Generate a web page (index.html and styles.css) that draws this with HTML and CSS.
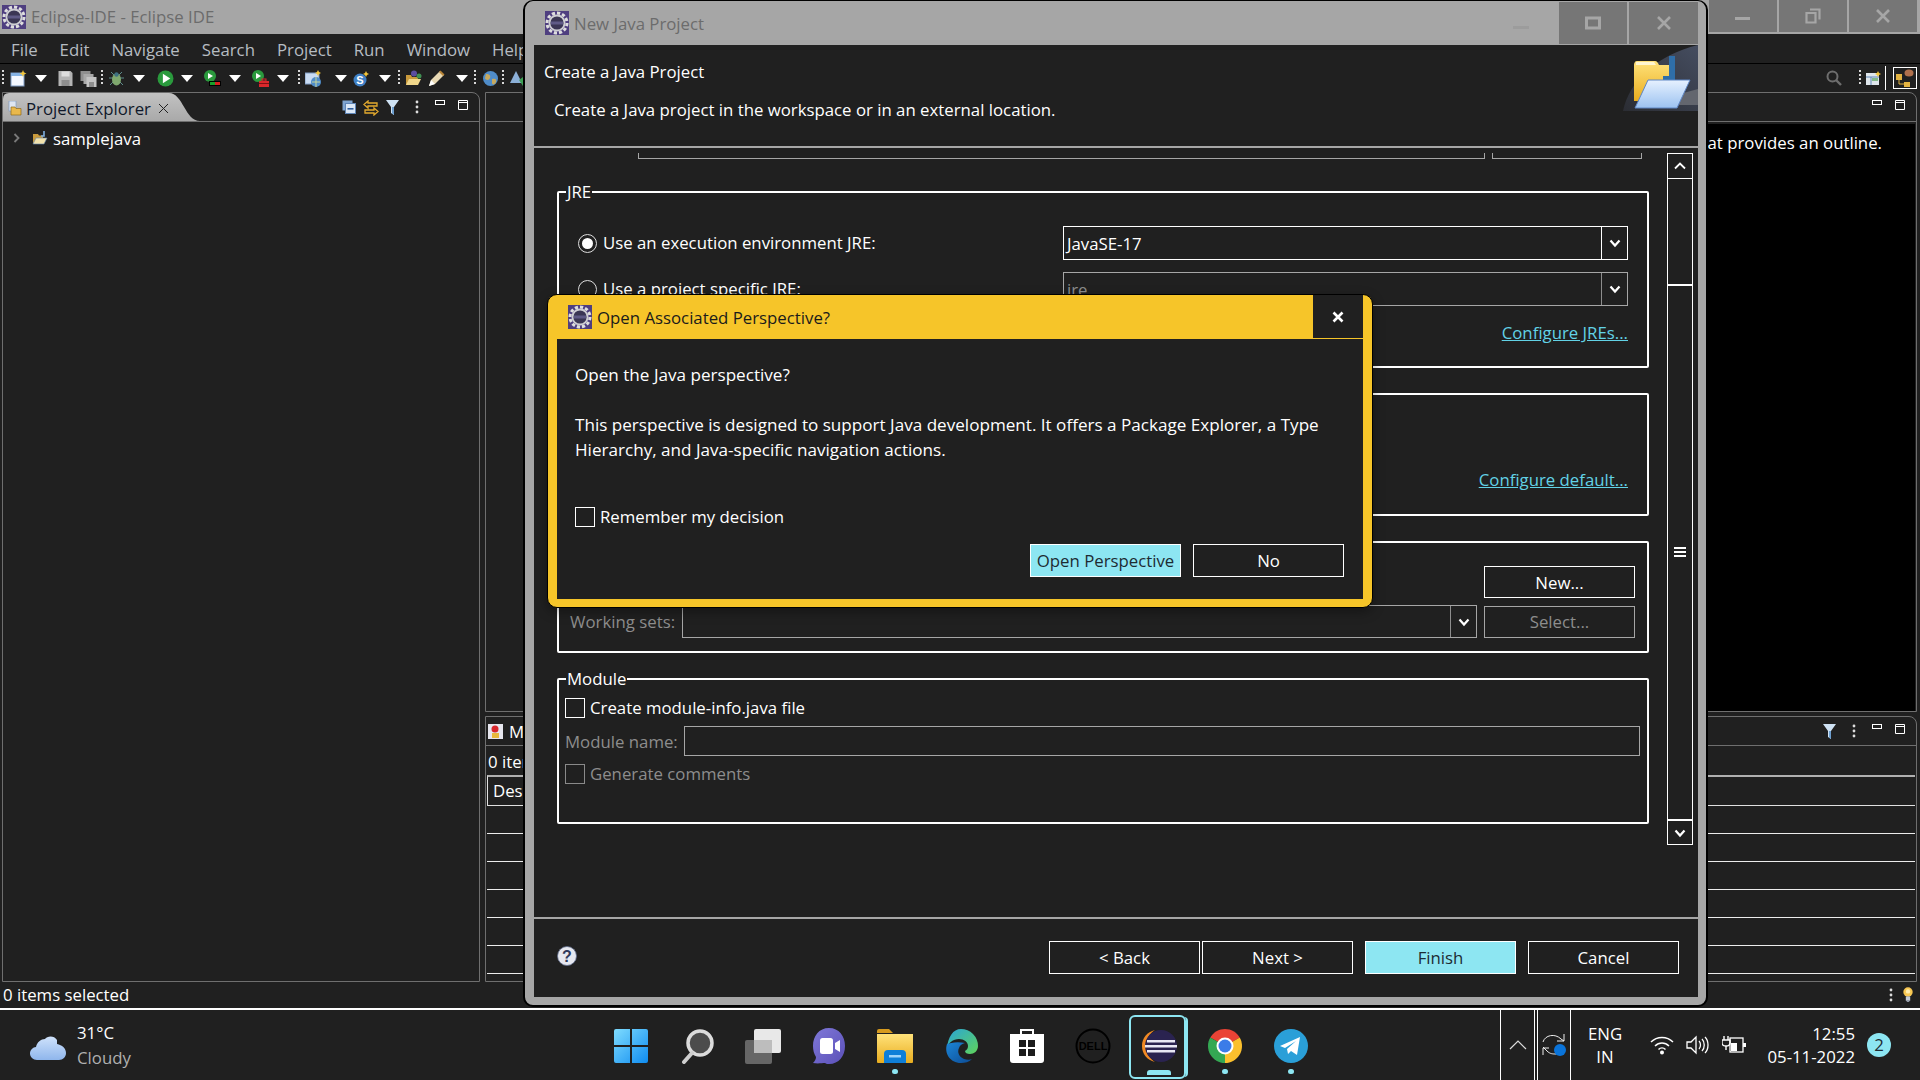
FILE: index.html
```html
<!DOCTYPE html>
<html lang="en">
<head>
    <meta charset="UTF-8">
    <title>New Java Project - Eclipse IDE</title>
    <link rel="stylesheet" href="styles.css">
</head>
<body>
    <svg class="defs" width="0" height="0">
        <defs>
            <linearGradient id="g-start" x1="0" y1="0" x2="1" y2="1"><stop offset="0" stop-color="#7fdcff"/><stop offset="1" stop-color="#0f8cf0"/></linearGradient>
            <linearGradient id="g-folder" x1="0" y1="0" x2="0" y2="1"><stop offset="0" stop-color="#ffe27a"/><stop offset="1" stop-color="#e9ad1f"/></linearGradient>
            <linearGradient id="g-chat" x1="0" y1="0" x2="1" y2="1"><stop offset="0" stop-color="#7f78d8"/><stop offset="1" stop-color="#5b50b8"/></linearGradient>
            <linearGradient id="g-edge1" x1="0" y1="0" x2="1" y2="1"><stop offset="0" stop-color="#2aa5d8"/><stop offset="1" stop-color="#5fd35a"/></linearGradient>
            <linearGradient id="g-edge2" x1="0" y1="0" x2="1" y2="1"><stop offset="0" stop-color="#1c86d8"/><stop offset="1" stop-color="#0d4c94"/></linearGradient>
            <linearGradient id="g-swoosh" x1="0" y1="1" x2="1" y2="0"><stop offset="0" stop-color="#2b2d33"/><stop offset="1" stop-color="#454d60"/></linearGradient>
            <linearGradient id="g-front" x1="0" y1="0" x2="0" y2="1"><stop offset="0" stop-color="#e6f1ff"/><stop offset="1" stop-color="#9cc2f0"/></linearGradient>
            <linearGradient id="g-cloud" x1="0" y1="0" x2="0" y2="1"><stop offset="0" stop-color="#cfe2fb"/><stop offset="1" stop-color="#8fb6ec"/></linearGradient>

            <symbol id="i-eclipse-small" viewBox="0 0 24 24">
                <rect width="24" height="24" fill="#4f3f80"/>
                <circle cx="12" cy="12" r="10" fill="none" stroke="#dedede" stroke-width="3" stroke-dasharray="3.200 2"/>
                <circle cx="12" cy="12" r="8.500" fill="#cfcfd4"/>
                <circle cx="12" cy="12" r="6.600" fill="#3b3654"/>
                <rect x="6" y="10.500" width="12" height="3" fill="#5f5a86"/>
            </symbol>
            <symbol id="i-caret" viewBox="0 0 12 7"><path d="M0 0h12L6 7z" fill="#fff"/></symbol>
            <symbol id="i-chev" viewBox="0 0 12 10"><path d="M1.500 2.500 6 7.500l4.500-5" fill="none" stroke="#fff" stroke-width="2.200"/></symbol>
            <symbol id="i-chev-up" viewBox="0 0 12 10"><path d="M1 7.500 6 2.500l5 5" fill="none" stroke="#fff" stroke-width="1.800"/></symbol>
            <symbol id="i-new" viewBox="0 0 17 17"><rect x="1" y="3" width="13" height="13" fill="#f4f8ff" stroke="#7f9cc4"/><rect x="1" y="3" width="13" height="3" fill="#86b3e4"/><path d="M13 0l1 2.500 2.500 1-2.500 1-1 2.500-1-2.500-2.500-1 2.500-1z" fill="#f3c63c"/></symbol>
            <symbol id="i-save" viewBox="0 0 16 17"><path d="M1 1h12l2 2v13H1z" fill="#b4b4b4"/><rect x="4" y="1.500" width="8" height="5" fill="#dedede"/><rect x="4" y="10" width="8" height="6" fill="#8e8e8e"/></symbol>
            <symbol id="i-saveall" viewBox="0 0 16 17"><path d="M0 1h10v10H0z" fill="#8f8f8f"/><path d="M3 4h10v10H3z" fill="#a8a8a8"/><path d="M6 7h10v10H6z" fill="#c4c4c4"/><rect x="8.500" y="12" width="5" height="5" fill="#8e8e8e"/></symbol>
            <symbol id="i-bug" viewBox="0 0 17 17"><path d="M3 2l3 3M14 2l-3 3M1 8h4M12 8h4M2 15l3-3M15 15l-3-3" stroke="#5d8c8c" fill="none"/><ellipse cx="8.500" cy="9.500" rx="4.500" ry="6" fill="#7fa86e"/><circle cx="8.500" cy="4.500" r="2.200" fill="#3d6f80"/></symbol>
            <symbol id="i-run" viewBox="0 0 16 16"><circle cx="8" cy="8" r="7.500" fill="#2a9a3d"/><path d="M5.500 3.500v9l7-4.500z" fill="#fff"/></symbol>
            <symbol id="i-cover" viewBox="0 0 17 17"><circle cx="6" cy="6" r="6" fill="#2a9a3d"/><path d="M4 3v6l5-3z" fill="#fff"/><rect x="5" y="11" width="12" height="5" fill="#000"/><rect x="6" y="12" width="5" height="3" fill="#1aa02a"/><rect x="11" y="12" width="5" height="3" fill="#d61f1f"/></symbol>
            <symbol id="i-extern" viewBox="0 0 17 17"><circle cx="6" cy="6" r="6" fill="#2a9a3d"/><path d="M4 3v6l5-3z" fill="#fff"/><rect x="7" y="11" width="10" height="6" fill="#d8282c"/><rect x="10" y="9" width="4" height="2" fill="none" stroke="#d8282c"/><rect x="7" y="13" width="10" height="1" fill="#7d1013"/></symbol>
            <symbol id="i-javaproj" viewBox="0 0 17 17"><rect x="0" y="3" width="14" height="11" fill="#c9dbf2" stroke="#7f9cc4"/><circle cx="11" cy="12" r="5" fill="#4f8cc9"/><path d="M7 12h8M11 7v10" stroke="#c8d69a"/><path d="M13 0l1 2 2 1-2 1-1 2-1-2-2-1 2-1z" fill="#f3c63c"/></symbol>
            <symbol id="i-search-s" viewBox="0 0 17 17"><circle cx="7" cy="10" r="6.500" fill="#3f7fc4"/><text x="7" y="14" text-anchor="middle" font-size="11" font-weight="700" font-family="Liberation Sans" fill="#fff">S</text><path d="M13 1l1 2 2 1-2 1-1 2-1-2-2-1 2-1z" fill="#f3c63c"/></symbol>
            <symbol id="i-openfolder" viewBox="0 0 17 17"><path d="M1 5h5l1 2h6v8H1z" fill="#c99a3c"/><path d="M1 15l3-6h12l-3 6z" fill="#f0d68a"/><circle cx="9" cy="3.500" r="3" fill="#5b4ca0"/><circle cx="14" cy="6" r="2.500" fill="#3f8f52"/></symbol>
            <symbol id="i-pencil" viewBox="0 0 17 17"><path d="M1 16l2-6L12 1l4 4-9 9z" fill="#e8d9b4"/><path d="M11 2l4 4 1.500-1.500-4-4z" fill="#b88436"/><path d="M1 16l2-6 4 4z" fill="#fff"/></symbol>
            <symbol id="i-globe" viewBox="0 0 17 17"><circle cx="8.500" cy="8.500" r="7.500" fill="#4f8cc9"/><path d="M4 4c3 0 5 1 4 4S3 10 3 8zM10 9c3-1 5 0 4 3s-4 3-4 1z" fill="#c7a95f"/></symbol>
            <symbol id="i-person" viewBox="0 0 17 17"><path d="M6 1l6 12H0z" fill="#8cb0d8"/><path d="M9 10l4-3 4 3-4 6z" fill="#3f9f55"/></symbol>
            <symbol id="i-collapse" viewBox="0 0 14 14"><rect x=".5" y=".5" width="10" height="10" fill="#7fa4d0"/><rect x="3.500" y="3.500" width="10" height="10" fill="#dce9f8" stroke="#5f86b8"/><rect x="5.500" y="8" width="6" height="1.600" fill="#2f5f9f"/></symbol>
            <symbol id="i-link" viewBox="0 0 16 16"><path d="M5 1L1 4.500 5 8V6h9V3H5zM11 8l4 3.500-4 3.500v-2H2v-3h9z" fill="none" stroke="#e4aa2e" stroke-width="1.300"/></symbol>
            <symbol id="i-filter" viewBox="0 0 13 15"><path d="M0 0h13L8 7v8l-3-2V7z" fill="#cfe2f4"/><path d="M6 7h2v8l-2-1.500z" fill="#6d9fd0"/></symbol>
            <symbol id="i-dots" viewBox="0 0 4 14"><circle cx="2" cy="2" r="1.400" fill="#ddd"/><circle cx="2" cy="7" r="1.400" fill="#ddd"/><circle cx="2" cy="12" r="1.400" fill="#ddd"/></symbol>
            <symbol id="i-view-min" viewBox="0 0 10 5"><rect x=".5" y=".5" width="9" height="4" fill="none" stroke="#fff"/></symbol>
            <symbol id="i-view-max" viewBox="0 0 10 10"><path d="M.5.5h9v9h-9zM.5 2.500h9" fill="none" stroke="#fff"/></symbol>
            <symbol id="i-project" viewBox="0 0 16 14"><path d="M1 3h5l1 1.500h4V12H1z" fill="#c99a3c"/><path d="M1 13l3-6h11l-3 6z" fill="#f2e2ac" stroke="#5f86b8" stroke-width=".6"/><path d="M12 0v5H9" fill="none" stroke="#7fb0e0" stroke-width="1.600"/></symbol>
            <symbol id="i-explorer" viewBox="0 0 14 15"><rect x="1" y="0" width="7" height="10" fill="#dfe6f2" stroke="#7f9cc4" stroke-width=".7"/><path d="M3 6h4l1 1.500h5V14H3z" fill="#e9b84c" stroke="#8f6a1c" stroke-width=".7"/></symbol>
            <symbol id="i-help" viewBox="0 0 20 20"><circle cx="10" cy="10" r="9.500" fill="#e6e8f0"/><circle cx="10" cy="10" r="9.500" fill="none" stroke="#5f6c8c" stroke-width=".8"/><text x="10" y="15.500" text-anchor="middle" font-size="16" font-weight="700" font-family="Liberation Sans" fill="#2f3a5c">?</text></symbol>
            <symbol id="i-markers" viewBox="0 0 15 15"><rect width="15" height="15" fill="#e6e6ee"/><circle cx="7" cy="5" r="3.500" fill="#d8262c"/><rect x="4" y="9" width="7" height="5" fill="#e8b93c"/></symbol>
            <symbol id="i-lookup" viewBox="0 0 16 16"><circle cx="6.500" cy="6.500" r="5" fill="none" stroke="#6e6e6e" stroke-width="2"/><path d="M10 10l5 5" stroke="#6e6e6e" stroke-width="2.400"/></symbol>
            <symbol id="i-persp-open" viewBox="0 0 15 15"><rect y="2" width="13" height="12" fill="#dfe6ec"/><path d="M0 6h13M5 6v8" stroke="#5f86b8"/><rect x="6" y="7" width="6" height="3" fill="#83b98a"/><path d="M12 0l1 2 2 1-2 1-1 2-1-2-2-1 2-1z" fill="#f3c63c"/></symbol>
            <symbol id="i-persp-java" viewBox="0 0 18 18"><rect x="0" y="5" width="6" height="6" fill="#e3b341"/><rect x="8" y="13" width="6" height="5" fill="#e3b341"/><path d="M3 11v4h5" stroke="#e3b341" fill="none"/><ellipse cx="13" cy="4" rx="4.500" ry="3.500" fill="#b0704c"/></symbol>
            <symbol id="i-bulb" viewBox="0 0 16 24"><circle cx="8" cy="8" r="7.500" fill="#f7c752"/><circle cx="8" cy="7" r="3.500" fill="#ffeeb0"/><rect x="4.500" y="15" width="7" height="7" fill="#c4ccd8"/><rect x="6" y="22" width="4" height="2" fill="#8f98a8"/></symbol>
        </defs>
    </svg>

    <div class="ide">
        <div class="ide-title">
            <svg class="app-icon"><use href="#i-eclipse-small"/></svg>
            <span class="ide-title-text">Eclipse-IDE - Eclipse IDE</span>
            <div class="win-btns">
                <span class="win-btn"><svg width="16" height="16"><rect x="0" y="9" width="15" height="3" fill="#a6a6a6"/></svg></span>
                <span class="win-btn"><svg width="16" height="16"><path d="M5 1.500h9.500v10M1.500 5h9v9.500h-9z" fill="none" stroke="#a6a6a6" stroke-width="2.200"/></svg></span>
                <span class="win-btn"><svg width="16" height="16"><path d="M2 2l12 12M14 2L2 14" stroke="#a6a6a6" stroke-width="2.600"/></svg></span>
            </div>
        </div>
        <nav class="menu">
            <span>File</span><span>Edit</span><span>Navigate</span><span>Search</span><span>Project</span><span>Run</span><span>Window</span><span>Help</span>
        </nav>
        <div class="toolbar">
            <div class="tools">
                <i class="grip"></i>
                <svg class="tb"><use href="#i-new"/></svg>
                <svg class="caret"><use href="#i-caret"/></svg>
                <svg class="tb"><use href="#i-save"/></svg>
                <svg class="tb"><use href="#i-saveall"/></svg>
                <i class="grip"></i>
                <svg class="tb"><use href="#i-bug"/></svg>
                <svg class="caret"><use href="#i-caret"/></svg>
                <svg class="tb"><use href="#i-run"/></svg>
                <svg class="caret"><use href="#i-caret"/></svg>
                <svg class="tb"><use href="#i-cover"/></svg>
                <svg class="caret"><use href="#i-caret"/></svg>
                <svg class="tb"><use href="#i-extern"/></svg>
                <svg class="caret"><use href="#i-caret"/></svg>
                <i class="grip"></i>
                <svg class="tb"><use href="#i-javaproj"/></svg>
                <svg class="caret"><use href="#i-caret"/></svg>
                <svg class="tb"><use href="#i-search-s"/></svg>
                <svg class="caret"><use href="#i-caret"/></svg>
                <i class="grip"></i>
                <svg class="tb"><use href="#i-openfolder"/></svg>
                <svg class="tb"><use href="#i-pencil"/></svg>
                <svg class="caret"><use href="#i-caret"/></svg>
                <i class="grip"></i>
                <svg class="tb"><use href="#i-globe"/></svg>
                <i class="grip"></i>
                <svg class="tb"><use href="#i-person"/></svg>
            </div>
            <div class="tools-right">
                <svg class="lookup"><use href="#i-lookup"/></svg>
                <i class="grip"></i>
                <svg class="persp-open"><use href="#i-persp-open"/></svg>
                <span class="persp-sep"></span>
                <span class="persp-btn"><svg><use href="#i-persp-java"/></svg></span>
            </div>
        </div>

        <main class="workspace">
            <section class="panel panel-left">
                <header class="panel-head">
                    <div class="tab">
                        <svg class="tab-icon"><use href="#i-explorer"/></svg>
                        <span>Project Explorer</span>
                        <svg class="tab-close" width="11" height="11"><path d="M1 1l9 9M10 1l-9 9" stroke="#222" stroke-width="1"/></svg>
                    </div>
                    <div class="view-tools">
                        <svg class="vt-14"><use href="#i-collapse"/></svg>
                        <svg class="vt-16"><use href="#i-link"/></svg>
                        <svg class="vt-filter"><use href="#i-filter"/></svg>
                        <svg class="vt-dots"><use href="#i-dots"/></svg>
                        <svg class="vt-min"><use href="#i-view-min"/></svg>
                        <svg class="vt-max"><use href="#i-view-max"/></svg>
                    </div>
                </header>
                <div class="tree-row">
                    <svg class="tree-chev" width="8" height="10"><path d="M1.500 1l4 4-4 4" fill="none" stroke="#7a7a7a" stroke-width="1.800"/></svg>
                    <svg class="tree-icon"><use href="#i-project"/></svg>
                    <span>samplejava</span>
                </div>
            </section>

            <div class="right-col">
                <div class="top-row">
                    <section class="panel panel-editor">
                        <header class="panel-head"></header>
                    </section>
                    <section class="panel panel-outline">
                        <header class="panel-head">
                            <div class="view-tools">
                                <svg class="vt-min"><use href="#i-view-min"/></svg>
                                <svg class="vt-max"><use href="#i-view-max"/></svg>
                            </div>
                        </header>
                        <div class="outline-body">There is no active editor that provides an outline.</div>
                    </section>
                </div>
                <section class="panel panel-markers">
                    <header class="panel-head">
                        <div class="markers-tab">
                            <svg class="markers-icon"><use href="#i-markers"/></svg>
                            <span>Markers</span>
                        </div>
                        <div class="view-tools">
                            <svg class="vt-filter"><use href="#i-filter"/></svg>
                            <svg class="vt-dots"><use href="#i-dots"/></svg>
                            <svg class="vt-min"><use href="#i-view-min"/></svg>
                            <svg class="vt-max"><use href="#i-view-max"/></svg>
                        </div>
                    </header>
                    <div class="markers-count">0 items</div>
                    <div class="markers-table">
                        <div class="markers-th">Description</div>
                        <div class="markers-tr"></div>
                        <div class="markers-tr"></div>
                        <div class="markers-tr"></div>
                        <div class="markers-tr"></div>
                        <div class="markers-tr"></div>
                        <div class="markers-tr"></div>
                    </div>
                </section>
            </div>
        </main>

        <div class="status">
            <span>0 items selected</span>
            <div class="status-right">
                <svg class="status-dots" width="4" height="14"><use href="#i-dots"/></svg>
                <svg class="status-bulb"><use href="#i-bulb"/></svg>
            </div>
        </div>
    </div>

    <!-- wizard window -->
    <div class="wizard">
        <div class="wizard-title">
            <svg class="app-icon"><use href="#i-eclipse-small"/></svg>
            <span class="wizard-title-text">New Java Project</span>
            <svg class="faint-min" width="16" height="4"><rect width="16" height="3" fill="#9c9c9c"/></svg>
            <span class="dlg-btn"><svg width="16" height="16"><rect x="1.500" y="3" width="13" height="10" fill="none" stroke="#a6a6a6" stroke-width="3"/></svg></span>
            <span class="dlg-btn"><svg width="16" height="16"><path d="M2 2l12 12M14 2L2 14" stroke="#a6a6a6" stroke-width="2.600"/></svg></span>
        </div>
        <header class="wizard-head">
            <div class="wizard-head-text">
                <div class="wizard-heading">Create a Java Project</div>
                <div class="wizard-desc">Create a Java project in the workspace or in an external location.</div>
            </div>
            <svg class="banner" width="75" height="66" viewBox="0 0 75 66">
                <path d="M0 66C6 36 34 10 75 0V66z" fill="url(#g-swoosh)"/>
                <path d="M75 44l-22 6-2 10 24 0z" fill="#63666e"/>
                <path d="M11 20c0-2 1-4 3-4h18c2 0 3 2 4 4h14v36H11z" fill="url(#g-folder)"/>
                <path d="M13 17h18l2 3H13z" fill="#fff6d0"/>
                <path d="M46 11h6v25H40v-5h6z" fill="#2f6ea8"/>
                <path d="M25 35h42l-13 28H12z" fill="url(#g-front)" stroke="#5f86c4"/>
            </svg>
        </header>
        <div class="wizard-main">
            <div class="wizard-form">
                <div class="clipped">
                    <span class="clipped-a"></span>
                    <span class="clipped-b"></span>
                </div>

                <div class="group group-jre">
                    <span class="group-label">JRE</span>
                    <div class="jre-row">
                        <label class="opt"><i class="radio on"></i>Use an execution environment JRE:</label>
                        <div class="combo combo-jre"><span>JavaSE-17</span><b class="combo-arrow"><svg width="12" height="10"><use href="#i-chev"/></svg></b></div>
                    </div>
                    <div class="jre-row">
                        <label class="opt"><i class="radio"></i>Use a project specific JRE:</label>
                        <div class="combo combo-jre off"><span>jre</span><b class="combo-arrow"><svg width="12" height="10"><use href="#i-chev"/></svg></b></div>
                    </div>
                    <a class="link">Configure JREs...</a>
                </div>

                <div class="group group-layout">
                    <a class="link">Configure default...</a>
                </div>

                <div class="group group-sets">
                    <div class="sets-row sets-row-top">
                        <button class="btn btn-side">New...</button>
                    </div>
                    <div class="sets-row">
                        <span class="off-text sets-label">Working sets:</span>
                        <div class="combo combo-sets off"><span></span><b class="combo-arrow"><svg width="12" height="10"><use href="#i-chev"/></svg></b></div>
                        <button class="btn btn-side btn-off">Select...</button>
                    </div>
                </div>

                <div class="group group-module">
                    <span class="group-label">Module</span>
                    <label class="opt opt-check"><i class="check"></i>Create module-info.java file</label>
                    <div class="module-name">
                        <span class="off-text module-label">Module name:</span>
                        <div class="text-field"></div>
                    </div>
                    <label class="opt opt-check off-text"><i class="check off"></i>Generate comments</label>
                </div>
            </div>
            <div class="scrollbar">
                <span class="sb-btn"><svg width="12" height="10"><use href="#i-chev-up"/></svg></span>
                <span class="sb-track"></span>
                <span class="sb-thumb"><i></i></span>
                <span class="sb-btn sb-btn-down"><svg width="12" height="10"><use href="#i-chev"/></svg></span>
            </div>
        </div>
        <footer class="wizard-foot">
            <svg class="help"><use href="#i-help"/></svg>
            <div class="wizard-buttons">
                <button class="btn btn-back">&lt; Back</button>
                <button class="btn btn-next">Next &gt;</button>
                <button class="btn primary btn-finish">Finish</button>
                <button class="btn btn-cancel">Cancel</button>
            </div>
        </footer>
    </div>

    <!-- question dialog on top of the wizard -->
    <div class="prompt">
        <div class="prompt-title">
            <svg class="app-icon"><use href="#i-eclipse-small"/></svg>
            <span class="prompt-title-text">Open Associated Perspective?</span>
            <span class="prompt-close"><svg width="12" height="12"><path d="M1.500 1.500l9 9M10.500 1.500l-9 9" stroke="#fff" stroke-width="2.600"/></svg></span>
        </div>
        <div class="prompt-body">
            <p>Open the Java perspective?</p>
            <p>This perspective is designed to support Java development. It offers a Package Explorer, a Type<br>Hierarchy, and Java-specific navigation actions.</p>
            <label class="opt prompt-remember"><i class="check"></i>Remember my decision</label>
            <div class="prompt-buttons">
                <button class="btn primary">Open Perspective</button>
                <button class="btn">No</button>
            </div>
        </div>
    </div>

    <footer class="taskbar">
        <div class="weather">
            <svg class="cloud" width="36" height="24" viewBox="0 0 36 24"><path d="M7 24C3 24 0 21 0 17.500S3 11 6 11C7 6 11 3 15 3c2-3 9-4 12 1 0 2 0 3 0 4 5 1 9 4 9 9 0 4-3 7-7 7z" fill="url(#g-cloud)"/></svg>
            <div class="weather-text">
                <span>31°C</span>
                <span class="weather-sub">Cloudy</span>
            </div>
        </div>
        <div class="task-icons">
            <span class="task"><svg width="36" height="36" viewBox="0 0 36 36"><path d="M1 3a2 2 0 0 1 2-2h14v16H1zM19 1h14a2 2 0 0 1 2 2v14H19zM1 19h16v16H3a2 2 0 0 1-2-2zM19 19h16v14a2 2 0 0 1-2 2H19z" fill="url(#g-start)"/></svg></span>
            <span class="task"><svg width="36" height="36" viewBox="0 0 36 36"><circle cx="21" cy="15" r="12" fill="#4c4c4c" stroke="#dcdcdc" stroke-width="3.500"/><path d="M13 25L5 34" stroke="#cfcfcf" stroke-width="4" stroke-linecap="round"/></svg></span>
            <span class="task"><svg width="36" height="36" viewBox="0 0 36 36"><rect x="9" y="1" width="27" height="24" rx="2" fill="#e8e8e8"/><rect x="0" y="12" width="27" height="24" rx="2" fill="#666"/><rect x="9" y="12" width="18" height="13" fill="#bdbdbd"/></svg></span>
            <span class="task"><svg width="36" height="36" viewBox="0 0 36 36"><path d="M18 0C8 0 2 8 2 18c0 4 1 8 3 11 0 2-1 4-3 6 5 1 9 0 12 0 1 1 3 1 4 1 10 0 16-8 16-18S28 0 18 0z" fill="url(#g-chat)"/><rect x="9" y="10" width="13" height="16" rx="2.500" fill="#fff"/><path d="M24 15l5-3v12l-5-3z" fill="#fff"/></svg></span>
            <span class="task"><svg width="36" height="36" viewBox="0 0 36 36"><path d="M0 3a2 2 0 0 1 2-2h10l4 4H0z" fill="#d69a1e"/><path d="M0 6h36v28a1 1 0 0 1-1 1H1a1 1 0 0 1-1-1z" fill="url(#g-folder)"/><path d="M7 35v-9a4 4 0 0 1 4-4h14a4 4 0 0 1 4 4v9z" fill="#0f7fd8"/><rect x="12" y="27" width="12" height="2.500" fill="#9fd4fa"/></svg></span>
            <span class="task"><svg width="36" height="36" viewBox="0 0 36 36"><path d="M18 1a17 17 0 0 1 17 17c0 5-4 8-8 8-3 0-5-1-5-3 2-1 3-3 3-5 0-4-4-7-9-7-6 0-11 4-12 9C5 9 10 1 18 1z" fill="url(#g-edge1)"/><path d="M4 16c-3 9 3 19 14 19 4 0 8-1 11-4-2 1-5 1-8 0-5-2-7-7-5-11 1-3 3-4 6-5-8-2-15 0-18 1z" fill="url(#g-edge2)"/></svg></span>
            <span class="task"><svg width="36" height="36" viewBox="0 0 36 36"><path d="M12 6V2h12v4" fill="none" stroke="#fff" stroke-width="2"/><path d="M1 6h34v26a3 3 0 0 1-3 3H4a3 3 0 0 1-3-3z" fill="#fff"/><path d="M10 12h7v7h-7zM19 12h7v7h-7zM10 21h7v7h-7zM19 21h7v7h-7z" fill="#1c1c1c"/></svg></span>
            <span class="task"><svg width="36" height="36" viewBox="0 0 36 36"><circle cx="18" cy="18" r="16.500" fill="none" stroke="#000" stroke-width="2"/><text x="18" y="22" text-anchor="middle" font-size="11" font-weight="700" font-family="Liberation Sans" fill="#000">DELL</text></svg></span>
            <span class="task task-active"><svg width="36" height="36" viewBox="0 0 36 36"><path d="M14 2C6 4 1 10 1 18s5 14 13 16C8 30 5 25 5 18S8 6 14 2z" fill="#f08a24"/><circle cx="20" cy="18" r="16" fill="#2a2350"/><path d="M6 12h28v2.500H6zM4 17h32v2.500H4zM6 22h28v2.500H6z" fill="#e8e8f4"/></svg></span>
            <span class="task"><svg width="36" height="36" viewBox="0 0 36 36"><path d="M18 18L3.280 9.500A17 17 0 0 1 32.720 9.500z" fill="#ea4335"/><path d="M18 18L3.280 9.500A17 17 0 0 0 18 35z" fill="#34a853"/><path d="M18 18L32.720 9.500A17 17 0 0 1 18 35z" fill="#fbc02d"/><circle cx="18" cy="18" r="8.500" fill="#fff"/><circle cx="18" cy="18" r="6.500" fill="#3b7ce8"/></svg></span>
            <span class="task"><svg width="36" height="36" viewBox="0 0 36 36"><circle cx="18" cy="18" r="17" fill="#2a9fd8"/><path d="M7 18l20-9-3 18-6-4-3 3-1-5 9-8-11 7z" fill="#fff"/></svg></span>
        </div>
        <div class="tray">
            <span class="tray-box"><svg width="18" height="10"><path d="M1 9l8-8 8 8" fill="none" stroke="#ddd" stroke-width="1.200"/></svg></span>
            <span class="tray-box tray-box-sync"><svg width="26" height="26" viewBox="0 0 26 26"><path d="M2 10C4 3 14 1 20 7l3 2M23 2v7h-7" fill="none" stroke="#eee"/><path d="M2 15l4 4c3 3 6 3 9 3M2 23v-7h6" fill="none" stroke="#eee"/><circle cx="19" cy="18" r="6" fill="#0a74da"/></svg></span>
            <div class="lang"><span>ENG</span><span>IN</span></div>
            <svg class="tray-icon wifi" width="24" height="20" viewBox="0 0 24 20"><path d="M1 7c6-6 16-6 22 0M5 11c4-4 10-4 14 0M8.500 14.500c2-2 5-2 7 0" fill="none" stroke="#fff" stroke-width="1.500"/><circle cx="12" cy="17.500" r="2" fill="#fff"/></svg>
            <svg class="tray-icon" width="24" height="20" viewBox="0 0 24 20"><path d="M1 7h4l5-5v16l-5-5H1z" fill="none" stroke="#fff" stroke-width="1.300"/><path d="M13 6c2 2 2 6 0 8M16 4c3 3 3 9 0 12M19 2c4 4 4 12 0 16" fill="none" stroke="#fff" stroke-width="1.300"/></svg>
            <svg class="tray-icon" width="24" height="20" viewBox="0 0 24 20"><path d="M2 1v4M6 1v4M0 5h8v3c0 2-2 3-4 3s-4-1-4-3z" fill="none" stroke="#fff" stroke-width="1.400"/><path d="M4 11v4" stroke="#fff" stroke-width="1.400"/><rect x="8" y="3" width="13" height="14" fill="none" stroke="#fff" stroke-width="1.300"/><rect x="9" y="8" width="6" height="8" fill="#fff"/><rect x="21" y="8" width="3" height="4" fill="#fff"/></svg>
            <div class="clock"><span>12:55</span><span>05-11-2022</span></div>
            <span class="badge">2</span>
        </div>
    </footer>
</body>
</html>
```

FILE: styles.css
```css
* {
    box-sizing: border-box;
}

html, body {
    margin: 0;
    padding: 0;
    width: 1920px;
    height: 1080px;
    overflow: hidden;
    background-color: #202020;
    color: #fff;
    font-family: "Open Sans", "Noto Sans", sans-serif;
    font-size: 16.8px;
}

.defs {
    position: absolute;
}

svg {
    display: block;
    flex: none;
}

.app-icon {
    width: 24px;
    height: 24px;
}

/* main window */
.ide {
    height: 1008px;
    display: flex;
    flex-direction: column;
}

.ide-title {
    height: 34px;
    background-color: #a6a6a6;
    display: flex;
    align-items: flex-start;
    padding-left: 2px;
    padding-top: 5px;
}

.ide-title-text {
    margin-left: 5px;
    color: #6c6c6c;
    line-height: 24px;
}

.win-btns {
    margin: -5px 3px 0 auto;
    display: flex;
    gap: 2px;
}

.win-btn {
    width: 68px;
    height: 32px;
    background-color: #767676;
    display: flex;
    align-items: center;
    justify-content: center;
}

.menu {
    height: 30px;
    border-bottom: 1px solid #000;
    display: flex;
    gap: 22px;
    padding-left: 11px;
    line-height: 31px;
    color: #b6bcc2;
}

.toolbar {
    height: 28px;
    display: flex;
    align-items: center;
    justify-content: space-between;
}

.tools {
    display: grid;
    grid-template-columns: 8px 25px 22px 23px 21px 7px 25px 24px 24px 23px 25px 23px 25px 21px 7px 30px 18px 26px 19px 7px 23px 28px 18px 8px 20px 8px 20px;
    align-items: center;
    padding-left: 2px;
}

.tb {
    width: 17px;
    height: 17px;
}

.caret {
    width: 12px;
    height: 7px;
}

.grip {
    display: block;
    width: 2px;
    height: 16px;
    background-image: linear-gradient(#d8d8d8 50%, transparent 50%);
    background-size: 2px 4px;
}

.tools-right {
    display: flex;
    align-items: center;
    padding-right: 3px;
}

.lookup {
    width: 16px;
    height: 16px;
    margin-right: 17px;
}

.persp-open {
    width: 15px;
    height: 15px;
    margin-left: 5px;
}

.persp-sep {
    width: 1px;
    height: 24px;
    background-color: #fff;
    margin: 0 7px 0 4px;
}

.persp-btn {
    width: 24px;
    height: 22px;
    border: 1px solid #fff;
    display: flex;
    align-items: center;
    justify-content: center;
}

.persp-btn svg {
    width: 18px;
    height: 18px;
}

/* views */
.workspace {
    flex: 1;
    display: grid;
    grid-template-columns: 478px 1fr;
    gap: 5px;
    padding: 0 3px 0 2px;
    min-height: 0;
}

.panel {
    border: 1px solid #6f6f6f;
    border-radius: 0 8px 0 0;
    display: flex;
    flex-direction: column;
    min-height: 0;
}

.panel-head {
    height: 29px;
    flex: none;
    border-bottom: 1px solid #6f6f6f;
    display: flex;
    align-items: flex-start;
    justify-content: space-between;
}

.panel-outline .panel-head {
    justify-content: flex-end;
}

.tab {
    width: 197px;
    height: 28px;
    background-image: linear-gradient(#c2c2c2, #a9a9a9);
    clip-path: path("M0 28V6Q0 0 6 0H166C180 0 182 28 197 28Z");
    color: #10182a;
    display: flex;
    align-items: center;
    padding-left: 5px;
    padding-top: 2px;
}

.tab-icon {
    width: 14px;
    height: 15px;
    margin-right: 4px;
}

.tab-close {
    margin-left: 7px;
}

.view-tools {
    display: flex;
    align-items: flex-start;
    gap: 7px;
    padding: 7px 11px 0 0;
}

.vt-14 {
    width: 14px;
    height: 14px;
}

.vt-16 {
    width: 16px;
    height: 16px;
}

.vt-filter {
    width: 13px;
    height: 15px;
}

.vt-dots {
    width: 4px;
    height: 14px;
    margin-left: 9px;
}

.vt-min {
    width: 10px;
    height: 5px;
    margin-left: 9px;
}

.vt-max {
    width: 10px;
    height: 10px;
    margin-left: 6px;
}

.tree-row {
    display: flex;
    align-items: center;
    height: 22px;
    margin-top: 5px;
    padding-left: 10px;
}

.tree-icon {
    width: 16px;
    height: 14px;
    margin: 0 5px 0 11px;
}

.right-col {
    display: grid;
    grid-template-rows: 620px 266px;
    gap: 4px;
    min-height: 0;
}

.top-row {
    display: grid;
    grid-template-columns: 1fr 412px;
    gap: 5px;
    min-height: 0;
}

.outline-body {
    flex: 1;
    margin: 2px 1px 0;
    background-color: #000;
    padding: 8px 33px 0 0;
    display: flex;
    justify-content: flex-end;
    line-height: 22px;
    white-space: nowrap;
}

.markers-tab {
    display: flex;
    align-items: center;
    height: 28px;
    padding-left: 2px;
}

.markers-icon {
    width: 15px;
    height: 15px;
    margin-right: 6px;
}

.markers-count {
    height: 22px;
    line-height: 22px;
    margin: 5px 0 0 2px;
}

.markers-table {
    margin: 2px 1px 0;
}

.markers-th {
    height: 31px;
    border: 1px solid #e0e0e0;
    border-top-width: 2px;
    border-top-color: #b0b0b0;
    border-right: 0;
    padding-left: 5px;
    line-height: 28px;
}

.markers-tr {
    height: 28px;
    border-bottom: 1px solid #ececec;
}

.status {
    height: 26px;
    display: flex;
    align-items: center;
    justify-content: space-between;
    padding: 0 3px 1px;
}

.status-right {
    display: flex;
    align-items: center;
    gap: 10px;
}

.status-dots {
    width: 4px;
    height: 14px;
}

.status-bulb {
    width: 10px;
    height: 15px;
    margin-right: 4px;
}

/* wizard */
.wizard {
    position: absolute;
    left: 523px;
    top: 0;
    width: 1185px;
    height: 1007px;
    border: 2px solid #000;
    border-top-width: 1px;
    border-radius: 10px;
    background-color: #a6a6a6;
    padding: 0 8px 8px 9px;
    display: flex;
    flex-direction: column;
}

.wizard-title {
    height: 44px;
    flex: none;
    display: flex;
    align-items: center;
    margin-left: 11px;
}

.wizard-title-text {
    margin-left: 5px;
    color: #6c6c6c;
}

.faint-min {
    margin: 10px 28px 0 auto;
}

.dlg-btn {
    width: 68px;
    height: 42px;
    margin-left: 2px;
    background-color: #767676;
    display: flex;
    align-items: center;
    justify-content: center;
}

.dlg-btn:last-child {
    width: 69px;
}

.wizard-head {
    height: 103px;
    flex: none;
    background-color: #202020;
    border-bottom: 2px solid #a6a6a6;
    display: flex;
    justify-content: space-between;
}

.wizard-head-text {
    padding: 16px 0 0 10px;
    line-height: 22px;
}

.wizard-desc {
    margin: 16px 0 0 10px;
}

.wizard-main {
    height: 769px;
    flex: none;
    background-color: #202020;
    display: flex;
}

.wizard-form {
    width: 1133px;
    padding: 5px 18px 0 23px;
}

.clipped {
    height: 6px;
    margin: 0 0 32px 81px;
    display: flex;
    gap: 7px;
}

.clipped span {
    border: 1px solid #a6a6a6;
    border-top: 0;
}

.clipped-a {
    width: 847px;
}

.clipped-b {
    width: 150px;
}

.group {
    position: relative;
    border: 2px solid #fff;
    border-radius: 2px;
    margin-bottom: 25px;
}

.group-label {
    position: absolute;
    left: 7px;
    top: -12px;
    padding: 0 1px;
    background-color: #202020;
    line-height: 22px;
}

.group-jre {
    height: 177px;
    padding: 33px 19px 0;
}

.jre-row {
    display: flex;
    align-items: center;
    justify-content: space-between;
    margin-bottom: 12px;
}

.opt {
    display: flex;
    align-items: center;
    line-height: 22px;
}

.radio {
    width: 19px;
    height: 19px;
    border: 1px solid #ddd;
    border-radius: 50%;
    margin-right: 6px;
    display: flex;
    align-items: center;
    justify-content: center;
}

.radio.on::after {
    content: "";
    width: 11px;
    height: 11px;
    border-radius: 50%;
    background-color: #fff;
}

.check {
    width: 20px;
    height: 20px;
    border: 1px solid #fff;
    margin-right: 5px;
    flex: none;
}

.check.off {
    border-color: #8a8a8a;
}

.off-text {
    color: #8d8d8d;
}

.combo {
    height: 34px;
    border: 1px solid #fff;
    display: flex;
    align-items: center;
    justify-content: space-between;
    padding-left: 3px;
}

.combo.off {
    border-color: #a6a6a6;
    color: #8d8d8d;
}

.combo-jre {
    width: 565px;
}

.combo-arrow {
    width: 26px;
    height: 100%;
    border-left: 1px solid currentColor;
    display: flex;
    align-items: center;
    justify-content: center;
}

.link {
    display: block;
    text-align: right;
    color: #62d2e6;
    text-decoration: underline;
    line-height: 22px;
}

.group-jre .link {
    margin-top: 16px;
}

.group-layout {
    height: 123px;
    padding: 74px 19px 0;
}

.group-sets {
    height: 112px;
    padding: 23px 12px 0 11px;
}

.sets-row {
    display: flex;
    align-items: center;
    gap: 7px;
}

.sets-row-top {
    justify-content: flex-end;
    margin-bottom: 7px;
}

.sets-label {
    width: 105px;
    white-space: nowrap;
}

.combo-sets {
    flex: 1;
    height: 33px;
}

.group-module {
    height: 146px;
    padding: 18px 7px 0 6px;
}

.opt-check {
    height: 20px;
}

.module-name {
    display: flex;
    align-items: center;
    gap: 5px;
    margin: 8px 0;
}

.module-label {
    width: 114px;
    white-space: nowrap;
}

.text-field {
    flex: 1;
    height: 30px;
    border: 1px solid #a6a6a6;
}

.scrollbar {
    width: 26px;
    height: 692px;
    margin-top: 5px;
    display: flex;
    flex-direction: column;
}

.scrollbar span {
    display: flex;
    align-items: center;
    justify-content: center;
    border: 1px solid #fff;
}

.sb-btn {
    height: 26px;
    flex: none;
}

.sb-track {
    height: 107px;
    flex: none;
    margin-top: -1px;
}

.sb-thumb {
    flex: 1;
    margin-top: -1px;
    border-top-width: 2px !important;
}

.sb-thumb i {
    display: block;
    width: 12px;
    height: 11px;
    background-image: linear-gradient(#fff 2px, transparent 2px);
    background-size: 12px 4px;
}

.sb-btn-down {
    margin-top: -1px;
    border-top-width: 2px !important;
}

.wizard-foot {
    flex: 1;
    background-color: #202020;
    border-top: 2px solid #a6a6a6;
    display: flex;
    align-items: flex-start;
    justify-content: space-between;
    padding: 22px 19px 0 23px;
}

.help {
    width: 20px;
    height: 20px;
    margin-top: 5px;
}

.wizard-buttons {
    display: flex;
}

.btn {
    width: 151px;
    height: 33px;
    padding: 0;
    background-color: #202020;
    border: 1px solid #fff;
    color: #fff;
    font: inherit;
}

.btn.primary {
    background-color: #8de6f2;
    color: #1d2b33;
}

.btn-next {
    margin-left: 2px;
}

.btn-finish {
    margin-left: 12px;
}

.btn-cancel {
    margin-left: 12px;
}

.btn-side {
    height: 32px;
}

.btn-off {
    border-color: #a6a6a6;
    color: #8d8d8d;
}

/* prompt */
.prompt {
    position: absolute;
    left: 547px;
    top: 294px;
    width: 826px;
    height: 314px;
    border: 1px solid #000;
    border-radius: 10px;
    background-color: #f6c529;
    padding: 0 9px 8px 9px;
    display: flex;
    flex-direction: column;
    box-shadow: 0 4px 12px rgba(0, 0, 0, 0.35);
}

.prompt-title {
    height: 44px;
    flex: none;
    display: flex;
    align-items: center;
    padding-left: 11px;
    color: #1b1b1b;
}

.prompt-title-text {
    margin-left: 5px;
}

.prompt-close {
    width: 50px;
    height: 43px;
    margin-left: auto;
    align-self: flex-start;
    background-color: #202020;
    display: flex;
    align-items: center;
    justify-content: center;
}

.prompt-body {
    flex: 1;
    background-color: #202020;
    padding: 23px 19px 0 18px;
    line-height: 25px;
}

.prompt-body p {
    margin: 0 0 25px;
    font-size: 17.1px;
}

.prompt-remember {
    margin-top: 45px;
    height: 20px;
}

.prompt-buttons {
    display: flex;
    justify-content: flex-end;
    gap: 12px;
    margin-top: 17px;
}

/* taskbar */
.taskbar {
    height: 72px;
    border-top: 2px solid #fff;
    background-color: #202020;
    display: flex;
}

.weather {
    width: 613px;
    flex: none;
    display: flex;
    align-items: center;
    padding-left: 30px;
}

.cloud {
    margin-right: 11px;
    margin-top: 5px;
}

.weather-text {
    display: flex;
    flex-direction: column;
    line-height: 25px;
}

.weather-sub {
    color: #b0b0b0;
}

.task-icons {
    display: flex;
    gap: 30px;
    padding-top: 18px;
}

.task {
    position: relative;
    width: 36px;
    height: 36px;
}

.task:nth-child(5)::after,
.task:nth-child(10)::after,
.task:nth-child(11)::after {
    content: "";
    position: absolute;
    left: 15px;
    top: 41px;
    width: 6px;
    height: 5px;
    border-radius: 3px;
    background-color: #8de6f2;
}

.task-active::before {
    content: "";
    position: absolute;
    left: -12px;
    top: -13px;
    width: 53px;
    height: 60px;
    border: 2px solid #8de6f2;
    border-radius: 6px;
    box-shadow: 4px 0 0 -2px #8de6f2;
}

.task-active::after {
    content: "";
    position: absolute;
    left: 6px;
    top: 42px;
    width: 24px;
    height: 5px;
    border-radius: 3px 3px 0 0;
    background-color: #8de6f2;
}

.tray {
    margin-left: auto;
    width: 420px;
    display: flex;
    align-items: center;
    line-height: 23px;
}

.tray-box {
    width: 35px;
    height: 70px;
    border: solid #fff;
    border-width: 0 1px;
    margin-right: 2px;
    display: flex;
    align-items: center;
    justify-content: center;
}

.tray-box-sync {
    width: 34px;
    margin-right: 0;
}

.lang {
    width: 34px;
    margin-left: 17px;
    display: flex;
    flex-direction: column;
    align-items: center;
}

.tray-icon {
    margin-left: 12px;
}

.wifi {
    margin-left: 28px;
}

.clock {
    width: 109px;
    display: flex;
    flex-direction: column;
    align-items: flex-end;
}

.badge {
    width: 24px;
    height: 24px;
    margin-left: 12px;
    border-radius: 50%;
    background-color: #8de6f2;
    color: #1d2b33;
    text-align: center;
}
```
